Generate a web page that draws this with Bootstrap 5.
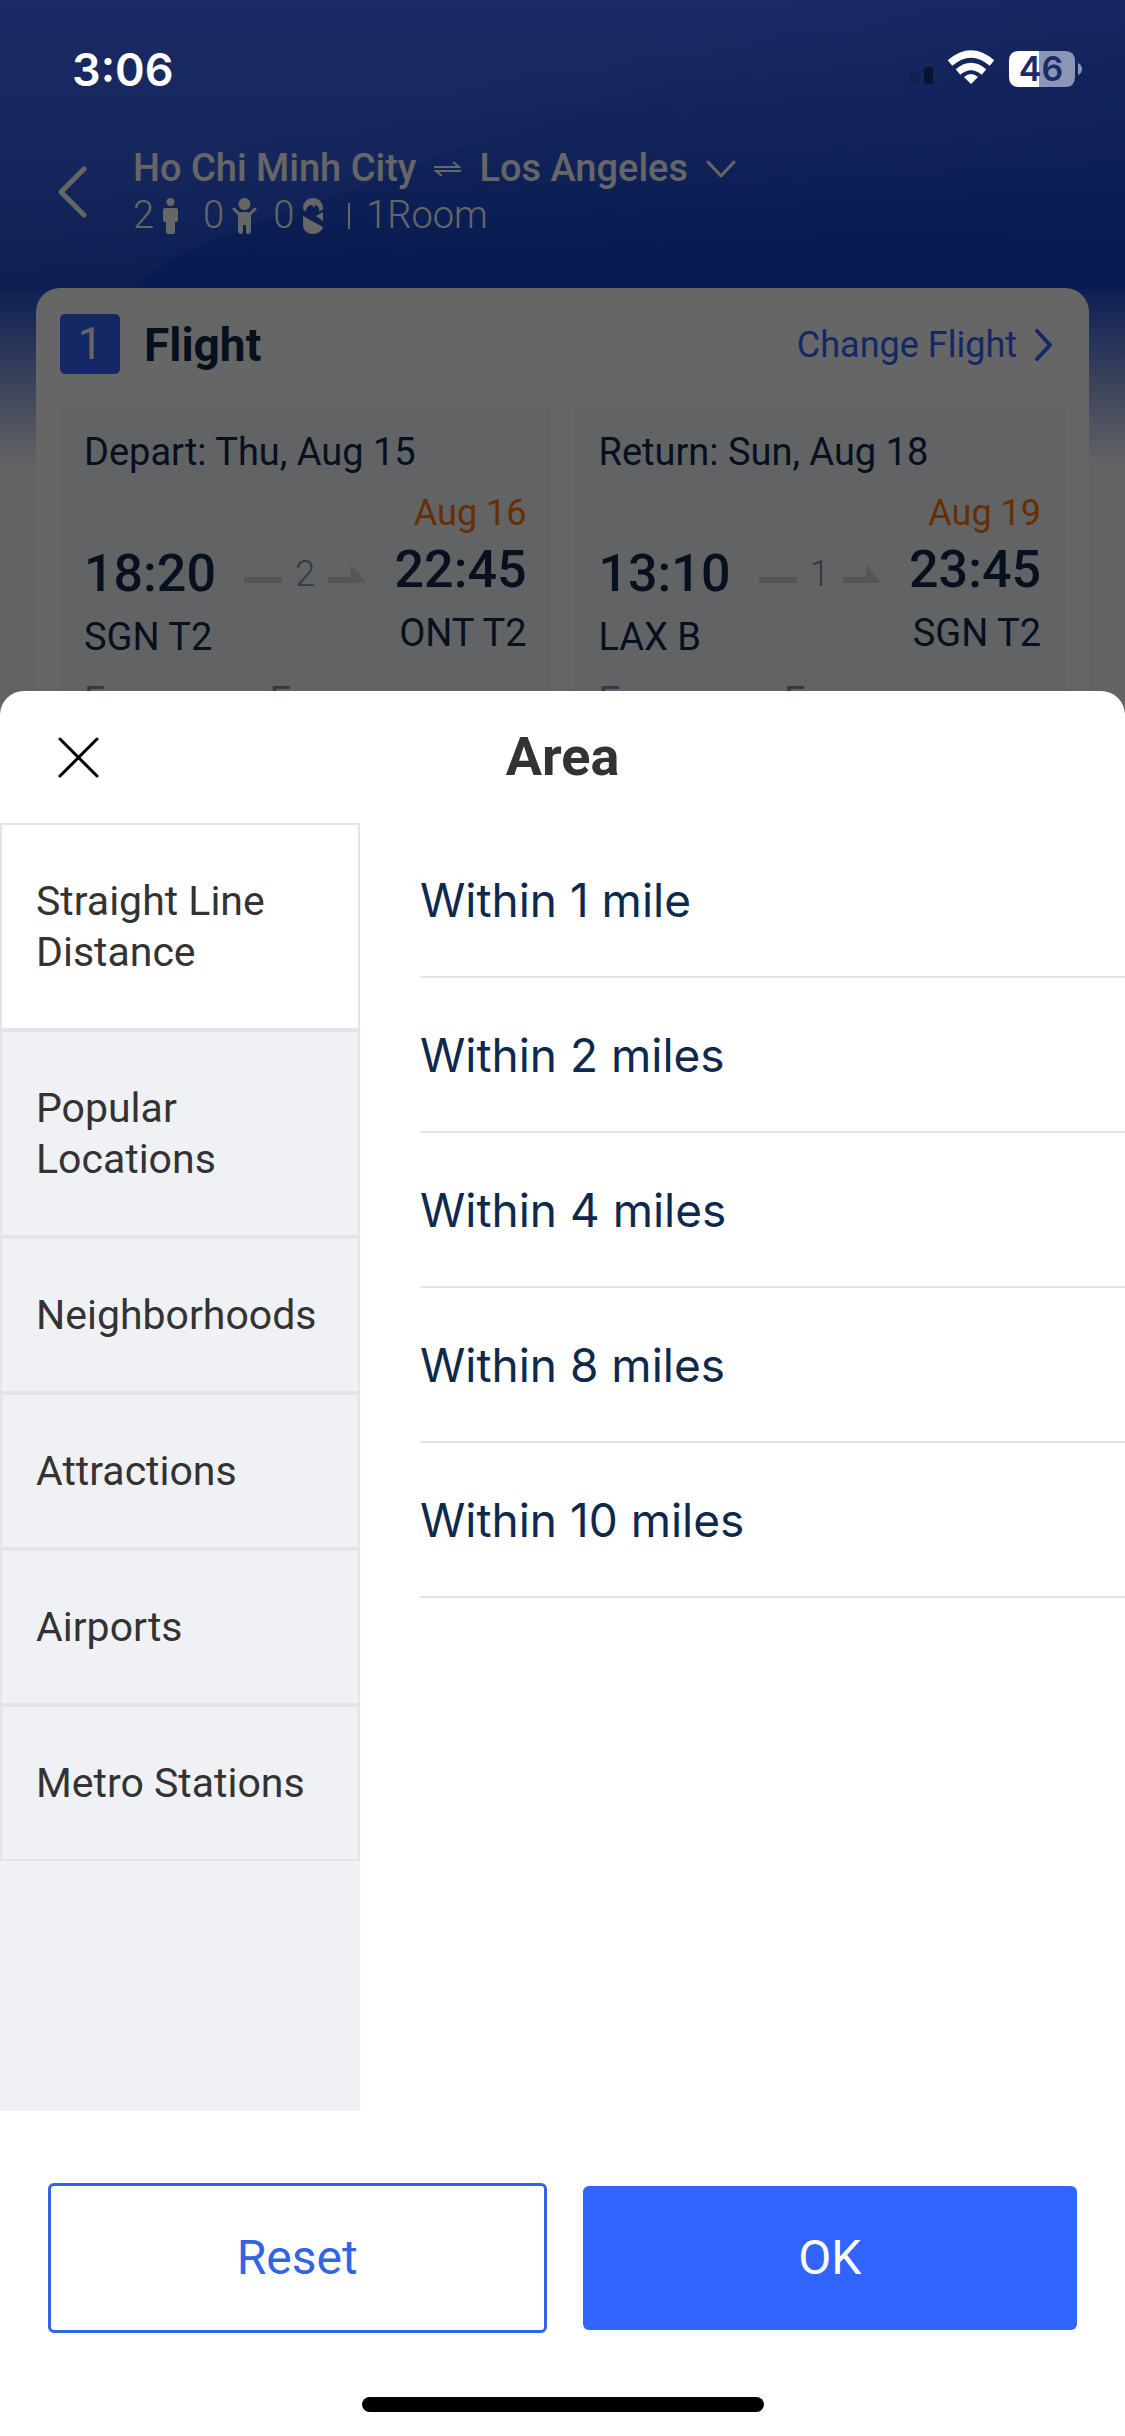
<!DOCTYPE html>
<html lang="en">
<head>
<meta charset="utf-8">
<meta name="viewport" content="width=device-width, initial-scale=1">
<title>Area</title>
<link href="https://cdn.jsdelivr.net/npm/bootstrap@5.3.0/dist/css/bootstrap.min.css" rel="stylesheet">
<style>
  body { font-family: Roboto, "Noto Sans", sans-serif; font-size: 38px; line-height: 48px; color: #0f294d; background: #f7f7f7; }
  a, a:hover { text-decoration: none; }
  svg { display: block; flex: none; }
  .screen { height: 100vh; overflow: hidden; background: linear-gradient(#4468fa 0, #3560e6 170px, #2450cf 290px, #f7f7f7 465px); }
  .sky { top: 0; left: 0; width: 100%; height: 290px; }
  .trip-head { padding: 145px 48px 49px 58px; color: #fff; line-height: 47px; gap: 45px; }
  .trip-title { font-size: 38px; font-weight: 500; gap: 18px; }
  .trip-sub { font-size: 38px; font-weight: 300; }
  .flight-card { margin: 0 36px; padding: 24px; border-radius: 24px; background: #fff; min-height: 600px; }
  .step { width: 60px; height: 60px; border-radius: 5px; background: #3264ff; color: #fff; font-size: 44px; }
  .card-name { font-size: 46px; line-height: 60px; padding-top: 3px; }
  .change { font-size: 36px; color: #3264ff; gap: 18px; padding: 3px 13px 0 0; }
  .legs { margin-top: 27px; gap: 24px; }
  .leg { flex: 1 1 0; padding: 26px 24px; border-radius: 6px; background: #f3f8fb; }
  .leg-row { padding-top: 13px; }
  .lower { padding-top: 53px; }
  .clock { font-size: 52px; line-height: 64px; font-weight: 500; margin-bottom: 7px; }
  .plus-day { font-size: 36px; color: #ff7700; margin-bottom: 1px; }
  .stops { height: 117px; gap: 13px; font-size: 36px; font-weight: 300; color: #8592a6; }
  .cabin { margin-top: 16px; color: #8592a6; }
  .dim { background: rgba(0, 0, 0, .6); }
  .status { padding: 46px 42px 0 72px; height: 94px; color: #fff; }
  .status-time { font: 600 45px/48px Inter, sans-serif; }
  .battery-text { font: 600 34px Inter, sans-serif; }
  .sheet { height: calc(100vh - 691px); border-radius: 24px 24px 0 0; background: #fff; }
  .sheet-head { height: 132px; padding: 0 58px; }
  .close-x { width: 41px; height: 41px; }
  .sheet-title { font-size: 54px; line-height: 64px; color: #333; }
  .cats { width: 32%; background: #f0f1f5; }
  .cat { padding: 51px 34px 50px; border: 2px solid #e3e4e6; background: #f0f1f5; color: #333; text-align: left; line-height: 51px; font-size: 41px; }
  .cat.active { background: #fff; }
  .options { padding-left: 60px; }
  .option { height: 155px; padding: 0; border: 0; border-bottom: 2px solid #e2e3e5; background: none; color: #0f294d; text-align: left; font: 400 46px/56px Inter, sans-serif; }
  .sheet-foot { padding: 72px 48px 64px; gap: 36px; }
  .act { flex: 1 1 0; border-radius: 6px; font-size: 48px; --bs-btn-hover-bg: #3264ff; }
  .act-reset { height: 150px; border: 3px solid #3264e6; color: #3264e6; }
  .act-ok, .act-ok:hover { height: 144px; background: #3264ff; color: #fff; }
  .home-bar { width: 402px; height: 15px; border-radius: 8px; background: #000; margin-bottom: 24px; }
</style>
</head>
<body>
<div class="screen position-relative">
  <svg class="sky position-absolute" viewBox="0 0 1125 290" preserveAspectRatio="none" aria-hidden="true">
    <defs>
      <linearGradient id="skyEdge" x1="0" y1="0" x2="1" y2="1"><stop offset=".35" stop-color="#0037c0" stop-opacity="0"/><stop offset=".8" stop-color="#0037c0" stop-opacity=".4"/></linearGradient>
      <linearGradient id="skySweep" x1="0" y1="1" x2="1" y2="0"><stop offset="0" stop-color="#0037c0" stop-opacity=".35"/><stop offset=".7" stop-color="#0037c0" stop-opacity="0"/></linearGradient>
    </defs>
    <path d="M870 0C700 90 520 120 400 170S180 240 130 290H1125V0Z" fill="url(#skySweep)"/>
    <path d="M0 0H1125V290H0Z" fill="url(#skyEdge)"/>
  </svg>

  <header class="trip-head position-relative d-flex align-items-center">
    <a href="#" aria-label="Back"><svg width="30" height="52" viewBox="0 0 30 52" fill="none" stroke="#fff" stroke-width="5" stroke-linecap="round" stroke-linejoin="round"><path d="M26 3 3 26 26 49"/></svg></a>
    <div>
      <div class="trip-title d-flex align-items-center">
        <span>Ho Chi Minh City</span>
        <svg width="27" height="16" viewBox="0 0 27 16" fill="none" stroke="#fff" stroke-width="2"><path d="M0 6H25L19 1M27 10H2L8 15"/></svg>
        <span>Los Angeles</span>
        <svg width="30" height="18" viewBox="0 0 30 18" fill="none" stroke="#fff" stroke-width="3" stroke-linecap="round" stroke-linejoin="round"><path d="M2 2 15 16 28 2"/></svg>
      </div>
      <div class="trip-sub d-flex align-items-center">
        <span>2</span>
        <svg class="ms-2 me-4" width="17" height="36" viewBox="0 0 17 36" fill="#fff"><circle cx="8.500" cy="4" r="4"/><path d="M3 10H14Q16 10 16 13V22Q16 24 13 24V34Q13 36 11 36H6Q4 36 4 34V24Q1 24 1 22V13Q1 10 3 10Z"/></svg>
        <span>0</span>
        <svg class="ms-2 me-3" width="25" height="36" viewBox="0 0 25 36" fill="#fff"><circle cx="12.500" cy="6" r="6"/><path d="M2 11 8 17H17L23 11" fill="none" stroke="#fff" stroke-width="3" stroke-linecap="round" stroke-linejoin="round"/><path d="M6 16 9 14H16L19 16V34Q18 36 16 36 14 36 14 34V27H11V34Q11 36 9 36 7 36 6 34Z"/></svg>
        <span>0</span>
        <svg class="ms-2 me-4" width="22" height="36" viewBox="0 0 22 36" fill="#fff"><path d="M1 11C1 4 5 0 11 0S21 4 21 11L17 14C18 10 16 8 13 7L12 10 10 7C7 7 4 9 4 14Z"/><path d="M1 18 21 29C20 33 16 36 11 36S1 33 1 27ZM21 14V23L14 18Z"/></svg>
        <svg width="2" height="26" viewBox="0 0 2 26"><path d="M1 0V26" stroke="#fff" stroke-width="2"/></svg>
        <span class="ms-3">1Room</span>
      </div>
    </div>
  </header>

  <main class="flight-card position-relative">
    <div class="d-flex align-items-center">
      <span class="step d-flex align-items-center justify-content-center">1</span>
      <h2 class="card-name fw-bold m-0 ms-4">Flight</h2>
      <a href="#" class="change d-flex align-items-center ms-auto">Change Flight
        <svg width="17" height="32" viewBox="0 0 17 32" fill="none" stroke="#3264ff" stroke-width="4" stroke-linecap="round" stroke-linejoin="round"><path d="M2 2 15 16 2 30"/></svg></a>
    </div>
    <div class="legs d-flex">
      <section class="leg">
        <div>Depart: Thu, Aug 15</div>
        <div class="leg-row d-flex">
          <div class="lower"><div class="clock">18:20</div><div>SGN T2</div></div>
          <div class="stops lower flex-fill d-flex align-items-center justify-content-center">
            <svg width="38" height="20" viewBox="0 0 38 20" fill="#d8d8d8"><path d="M0 13H38V19H0Z"/></svg><span>2</span>
            <svg width="38" height="20" viewBox="0 0 38 20" fill="#d8d8d8"><path d="M0 13H23V0L38 19H0Z"/></svg>
          </div>
          <div class="text-end"><div class="plus-day">Aug 16</div><div class="clock">22:45</div><div>ONT T2</div></div>
        </div>
        <div class="cabin">Economy · Economy</div>
      </section>
      <section class="leg">
        <div>Return: Sun, Aug 18</div>
        <div class="leg-row d-flex">
          <div class="lower"><div class="clock">13:10</div><div>LAX B</div></div>
          <div class="stops lower flex-fill d-flex align-items-center justify-content-center">
            <svg width="38" height="20" viewBox="0 0 38 20" fill="#d8d8d8"><path d="M0 13H38V19H0Z"/></svg><span>1</span>
            <svg width="38" height="20" viewBox="0 0 38 20" fill="#d8d8d8"><path d="M0 13H23V0L38 19H0Z"/></svg>
          </div>
          <div class="text-end"><div class="plus-day">Aug 19</div><div class="clock">23:45</div><div>SGN T2</div></div>
        </div>
        <div class="cabin">Economy · Economy</div>
      </section>
    </div>
  </main>

  <div class="dim position-absolute top-0 start-0 w-100 h-100 d-flex flex-column justify-content-between">
    <div class="status d-flex justify-content-between">
      <span class="status-time">3:06</span>
      <svg width="202" height="44" viewBox="881 48 202 44" role="img" aria-label="Wi-Fi, battery 46">
        <rect x="882" y="77" width="9" height="9" rx="3" fill="#15235a"/><rect x="896" y="77" width="9" height="9" rx="3" fill="#15235a"/><rect x="910" y="75" width="9" height="11" rx="3" fill="#102050"/><rect x="924" y="69" width="9" height="17" rx="3" fill="#0a1234"/>
        <g fill="none" stroke="#fff" stroke-width="7"><path d="M950 65Q971 47 992 65"/><path d="M958 74Q971 63 984 74"/></g>
        <path d="M964 79Q971 73 978 79L971 86Z" fill="#fff"/>
        <path d="M1039 53H1065Q1075 53 1075 63V79Q1075 89 1065 89H1039Z" fill="#8c95b5"/>
        <path d="M1039 53H1019Q1009 53 1009 63V79Q1009 89 1019 89H1039Z" fill="#fff"/>
        <path d="M1078 65Q1082 67 1082 71T1078 77Z" fill="#8c95b5"/>
        <text class="battery-text" x="1041" y="83" text-anchor="middle" fill="#1a2b68">46</text>
      </svg>
    </div>

    <div class="sheet d-flex flex-column" role="dialog" aria-labelledby="area-title">
      <div class="sheet-head d-flex align-items-center justify-content-between">
        <button type="button" class="btn p-0 border-0 close-x" aria-label="Close"><svg width="41" height="41" viewBox="0 0 41 41" stroke="#000" stroke-width="3" stroke-linecap="round"><path d="M2 2 39 39M39 2 2 39"/></svg></button>
        <h1 class="sheet-title fw-bold m-0" id="area-title">Area</h1>
        <span class="close-x"></span>
      </div>
      <div class="d-flex flex-fill">
        <nav class="cats d-flex flex-column" aria-label="Area type">
          <button type="button" class="cat active">Straight Line Distance</button>
          <button type="button" class="cat">Popular Locations</button>
          <button type="button" class="cat">Neighborhoods</button>
          <button type="button" class="cat">Attractions</button>
          <button type="button" class="cat">Airports</button>
          <button type="button" class="cat">Metro Stations</button>
        </nav>
        <div class="options flex-fill d-flex flex-column">
          <button type="button" class="option">Within 1 mile</button>
          <button type="button" class="option">Within 2 miles</button>
          <button type="button" class="option">Within 4 miles</button>
          <button type="button" class="option">Within 8 miles</button>
          <button type="button" class="option">Within 10 miles</button>
        </div>
      </div>
      <div class="sheet-foot d-flex align-items-center">
        <button type="button" class="btn act act-reset">Reset</button>
        <button type="button" class="btn act act-ok">OK</button>
      </div>
      <div class="home-bar mx-auto"></div>
    </div>
  </div>
</div>
<script src="https://cdn.jsdelivr.net/npm/bootstrap@5.3.0/dist/js/bootstrap.bundle.min.js"></script>
</body>
</html>
